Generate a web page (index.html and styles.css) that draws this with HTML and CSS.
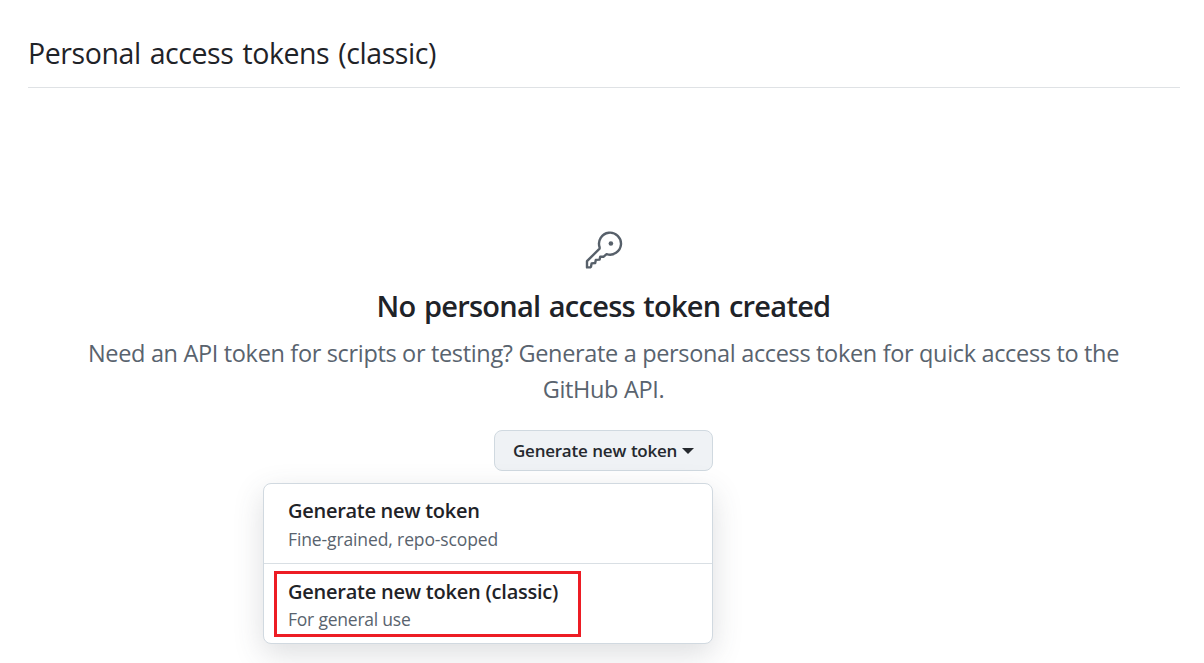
FILE: index.html
```html
<!DOCTYPE html>
<html lang="en">
<head>
<meta charset="utf-8">
<title>Personal access tokens</title>
<link rel="stylesheet" href="styles.css">
</head>
<body>
<header class="subhead"><h1 class="title">Personal access tokens (classic)</h1></header>
<main class="blankslate">
  <svg class="key" width="38" height="38" viewBox="0.6 -0.4 38 38" fill="none" stroke="#57606a" stroke-width="2.4" stroke-linejoin="round">
    <path d="M15.2 15.8A11 11 0 1 1 22.2 22.7L19 25.4L15.8 25.4L15.2 28.2L11.4 28.5L10.8 31.6L7.2 32L6.6 35.4L5.7 36H2.6V29.8L15.2 17.2Z"/>
    <circle cx="26.5" cy="12.1" r="2.3" fill="#57606a" stroke="none"/>
  </svg>
  <h2 class="heading">No personal access token created</h2>
  <p class="description"><span class="line">Need an API token for scripts or testing? Generate a personal access token for quick access to the</span><br><span class="line short">GitHub API.</span></p>
  <div class="dropdown">
    <button class="button"><span class="button-label">Generate new token</span><span class="caret"></span></button>
    <div class="menu">
      <a class="item"><span class="name">Generate new token</span><span class="note fine">Fine-grained, repo-scoped</span></a>
      <a class="item last"><span class="name classic">Generate new token (classic)</span><span class="note use">For general use</span><span class="highlight"></span></a>
    </div>
  </div>
</main>
</body>
</html>
```
FILE: styles.css
```css
* { box-sizing: border-box; }
body { margin: 0; height: 663px; overflow: hidden; background: #fff; color: #1f2328; font-family: "Open Sans", "Noto Sans", sans-serif; }
.subhead { margin: 0 24px 0 28px; height: 88px; padding-top: 33px; border-bottom: 1px solid #dfe2e5; }
.title { margin: 0; font-size: 28.5px; line-height: 40px; font-weight: 400; letter-spacing: -.42px; word-spacing: 2px; white-space: nowrap; }
.blankslate { display: flex; flex-direction: column; align-items: center; margin-left: 3px; padding-top: 143px; }
.key { display: block; }
.heading { margin: 17px 0 0; font-size: 29px; line-height: 40px; font-weight: 600; letter-spacing: -.74px; word-spacing: 1.6px; white-space: nowrap; }
.description { margin: 9px 0 0; font-size: 23.5px; line-height: 36px; letter-spacing: -.335px; color: #59636e; text-align: center; white-space: nowrap; }
.dropdown { position: relative; margin-top: 23px; }
.button { display: flex; align-items: center; width: 219px; height: 41px; padding: 0 18px; border: 1px solid #d0d9e0; border-radius: 8px; background: #eff2f5; color: #25292e; font: 600 17px/26px "Open Sans", sans-serif; white-space: nowrap; }
.button-label { letter-spacing: -.25px; word-spacing: .7px; }
.caret { margin-left: 5px; border: 6px solid transparent; border-top-color: currentColor; border-bottom: 0; }
.menu { position: absolute; top: 53px; right: 0; width: 450px; height: 161px; background: #fff; border: 1px solid #d1d9e0; border-radius: 8px; box-shadow: 0 10px 30px rgba(66,74,83,.18); }
.item { position: relative; display: flex; flex-direction: column; align-items: flex-start; height: 80px; padding: 12px 24px; border-bottom: 1px solid #d9dfe4; white-space: nowrap; }
.last { border-bottom: 0; }
.name { font-size: 20px; line-height: 30px; font-weight: 600; letter-spacing: -.28px; }
.classic { letter-spacing: -.23px; }
.last .name { position: relative; top: 1px; }
.note { font-size: 17.5px; line-height: 26px; color: #59636e; }
.fine { letter-spacing: -.12px; }
.use { letter-spacing: -.22px; }
.highlight { position: absolute; left: 10px; top: 7px; width: 307px; height: 66px; border: 3px solid #ed1c24; }
```
